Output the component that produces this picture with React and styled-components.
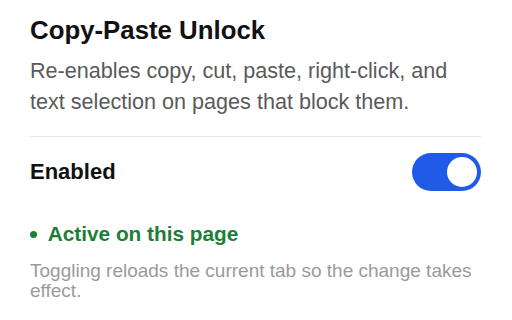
import React, { useState } from "react";
import styled, { createGlobalStyle } from "styled-components";

const Global = createGlobalStyle`
  html, body { margin: 0; padding: 0; background: #ffffff; }
  body { font-family: "Liberation Sans", Arial, Helvetica, sans-serif; }
`;

const Panel = styled.div`
  width: 512px;
  box-sizing: border-box;
  padding: 14.6px 31px 0 30px;
  display: flex;
  flex-direction: column;
`;

const Title = styled.h1`
  margin: 0;
  font-size: 25.8px;
  line-height: 30px;
  font-weight: 700;
  color: #111111;
`;

const Description = styled.p`
  margin: 10px 0 0;
  font-size: 21.6px;
  line-height: 31px;
  color: #5a5a5a;
`;

const Divider = styled.hr`
  margin: 19px 0 0;
  border: 0;
  border-top: 1px solid #e6e6e6;
  height: 0;
`;

const Row = styled.div`
  margin-top: 16px;
  display: flex;
  align-items: center;
  justify-content: space-between;
`;

const Label = styled.span`
  font-size: 22px;
  font-weight: 700;
  color: #111111;
`;

const Switch = styled.button`
  position: relative;
  width: 69px;
  height: 38px;
  border: 0;
  padding: 0;
  border-radius: 19px;
  background: ${(p) => (p.$on ? "#1f5ae9" : "#c8c8c8")};
  cursor: pointer;
`;

const Knob = styled.span`
  position: absolute;
  top: 4px;
  left: ${(p) => (p.$on ? "35px" : "4px")};
  width: 30px;
  height: 30px;
  border-radius: 50%;
  background: #ffffff;
`;

const Status = styled.div`
  margin-top: 30px;
  font-size: 20.8px;
  line-height: 26px;
  font-weight: 700;
  color: #1b8036;
  display: flex;
  align-items: center;
`;

const Dot = styled.span`
  display: inline-block;
  width: 7px;
  height: 7px;
  border-radius: 50%;
  background: #1b8036;
  margin-right: 10.7px;
  margin-top: 1px;
`;

const Note = styled.p`
  margin: 14px 0 0;
  font-size: 19px;
  line-height: 20px;
  color: #9a9a9a;
`;

export default function App() {
  const [on, setOn] = useState(true);
  return (
    <>
      <Global />
      <Panel>
        <Title>Copy-Paste Unlock</Title>
        <Description>
          Re-enables copy, cut, paste, right-click, and text selection on pages
          that block them.
        </Description>
        <Divider />
        <Row>
          <Label>Enabled</Label>
          <Switch $on={on} onClick={() => setOn(!on)} aria-label="Enabled">
            <Knob $on={on} />
          </Switch>
        </Row>
        <Status>
          <Dot />
          Active on this page
        </Status>
        <Note>
          Toggling reloads the current tab so the change takes effect.
        </Note>
      </Panel>
    </>
  );
}
